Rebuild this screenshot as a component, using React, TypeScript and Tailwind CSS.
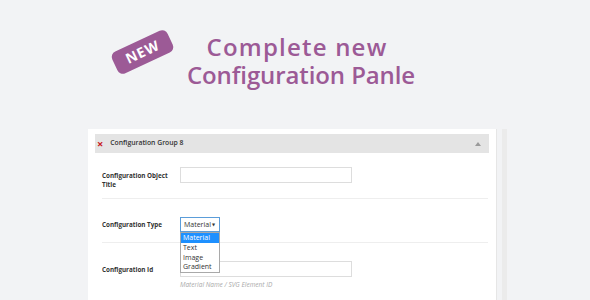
import React from "react";

const options = ["Material", "Text", "Image", "Gradient"];

export default function App() {
  return (
    <div className="w-[590px] h-[300px] bg-[#f2f3f5] overflow-hidden" style={{ fontFamily: '"Open Sans", "DejaVu Sans", sans-serif' }}>
      {/* Hero */}
      <div className="relative h-[129px]">
        <div className="absolute left-[112px] top-[40px] w-[61px] h-[24px] rounded-[6px] bg-[#9c5a96] -rotate-[25deg] flex items-center justify-center">
          <span className="text-white text-[14px] font-bold tracking-[1px] leading-none">NEW</span>
        </div>
        <div className="pt-[33px] pl-[178px]">
          <div className="w-[246px] text-center whitespace-nowrap text-[#9c5a96] text-[24px] leading-[28px] font-semibold">
            <div className="tracking-[1.2px] -translate-x-[4px]">Complete new</div>
            <div className="tracking-[-0.1px]">Configuration Panle</div>
          </div>
        </div>
      </div>

      {/* Panel */}
      <div className="flex">
        <div className="ml-[88px] w-[409px] h-[180px] bg-white border-r border-[#e6e6e6] pt-[5px] px-[7px]">
          <div className="h-[19px] bg-[#e4e4e4] flex items-center pl-[2px] pr-[8px]">
            <span className="text-[#c8171b] text-[11px] font-bold leading-none mr-[7px]">×</span>
            <span className="text-[6.8px] font-semibold text-[#333]">Configuration Group 8</span>
            <span className="ml-auto w-0 h-0 border-l-[3px] border-r-[3px] border-b-[4px] border-l-transparent border-r-transparent border-b-[#9a9a9a]" />
          </div>
          <div className="pl-[7px] pr-[1px] text-[#333]">
            {/* Row 1 */}
            <div className="flex h-[46px] pt-[14px] border-b border-[#eeeeee]">
              <div className="w-[78px] shrink-0 pt-[4px] text-[6.3px] leading-[9px] font-bold">
                Configuration Object
                <br />
                Title
              </div>
              <div className="w-[172px] h-[16px] border border-[#dddddd] bg-white" />
            </div>
            {/* Row 2 */}
            <div className="flex h-[44px] pt-[18px] border-b border-[#eeeeee]">
              <div className="w-[78px] shrink-0 pt-[3px] text-[6.3px] leading-[9px] font-bold whitespace-nowrap">
                Configuration Type
              </div>
              <div className="relative">
                <div className="w-[40px] h-[15px] border border-[#5b9dd9] flex items-center pl-[3px] pr-[4px] text-[7px] leading-none">
                  <span>Material</span>
                  <span className="ml-auto text-[4px]">▼</span>
                </div>
                <div className="absolute left-0 top-[15px] w-[40px] border border-[#a9a9a9] bg-white z-10 text-[7px] leading-[9.8px]">
                  {options.map((o, i) => (
                    <div key={o} className={i === 0 ? "bg-[#1e90ff] text-white px-[2px]" : "px-[2px]"}>
                      {o}
                    </div>
                  ))}
                </div>
              </div>
            </div>
            {/* Row 3 */}
            <div className="flex pt-[18px]">
              <div className="w-[78px] shrink-0 pt-[4px] text-[6.3px] leading-[9px] font-bold whitespace-nowrap">
                Configuration Id
              </div>
              <div>
                <div className="w-[172px] h-[16px] border border-[#dddddd] bg-white" />
                <div className="mt-[3px] text-[6.5px] italic text-[#aaaaaa]">Material Name / SVG Element ID</div>
              </div>
            </div>
          </div>
        </div>
        <div className="ml-[5px] w-[5px] h-[180px] bg-[#ebebeb]" />
      </div>
    </div>
  );
}
